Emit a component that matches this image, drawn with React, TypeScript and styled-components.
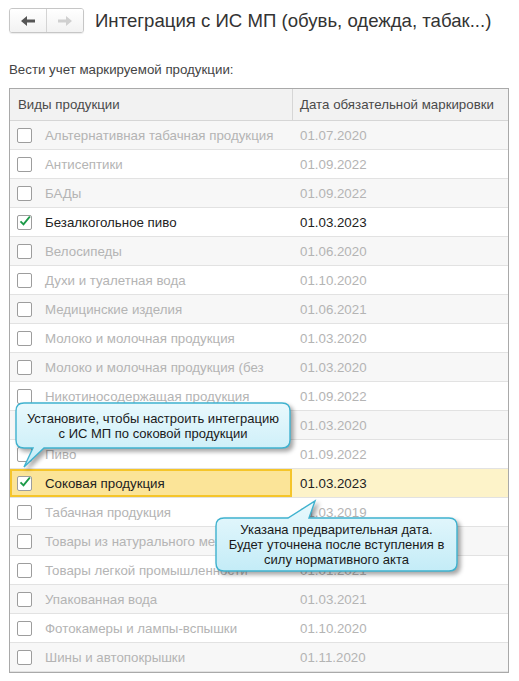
import React from 'react';
import styled, { createGlobalStyle } from 'styled-components';

interface ProductRow {
  name: string;
  date: string;
  checked?: boolean;
  selected?: boolean;
}

const rows: ProductRow[] = [
  { name: 'Альтернативная табачная продукция', date: '01.07.2020' },
  { name: 'Антисептики', date: '01.09.2022' },
  { name: 'БАДы', date: '01.09.2022' },
  { name: 'Безалкогольное пиво', date: '01.03.2023', checked: true },
  { name: 'Велосипеды', date: '01.06.2020' },
  { name: 'Духи и туалетная вода', date: '01.10.2020' },
  { name: 'Медицинские изделия', date: '01.06.2021' },
  { name: 'Молоко и молочная продукция', date: '01.03.2020' },
  { name: 'Молоко и молочная продукция (без', date: '01.03.2020' },
  { name: 'Никотиносодержащая продукция', date: '01.09.2022' },
  { name: 'Обувные товары', date: '01.03.2020' },
  { name: 'Пиво', date: '01.09.2022' },
  { name: 'Соковая продукция', date: '01.03.2023', checked: true, selected: true },
  { name: 'Табачная продукция', date: '01.03.2019' },
  { name: 'Товары из натурального меха', date: '12.08.2016' },
  { name: 'Товары легкой промышленности', date: '01.01.2021' },
  { name: 'Упакованная вода', date: '01.03.2021' },
  { name: 'Фотокамеры и лампы-вспышки', date: '01.10.2020' },
  { name: 'Шины и автопокрышки', date: '01.11.2020' },
];

const GlobalStyle = createGlobalStyle`
  body {
    margin: 0;
    background: #fff;
    font-family: 'Liberation Sans', Arial, sans-serif;
  }
`;

const App = () => {
  return (
    <Page>
      <GlobalStyle />
      <Header>
        <NavGroup>
          <NavButton>
            <Arrow dir="left" active />
          </NavButton>
          <NavButton divider>
            <Arrow dir="right" />
          </NavButton>
        </NavGroup>
        <Title>Интеграция с ИС МП (обувь, одежда, табак...)</Title>
      </Header>

      <Label>Вести учет маркируемой продукции:</Label>

      <TableWrap>
        <HeadRow>
          <HeadCell>Виды продукции</HeadCell>
          <HeadCell divider>Дата обязательной маркировки</HeadCell>
        </HeadRow>

        {rows.map((r, i) => (
          <Row key={r.name} odd={i % 2 === 0}>
            <NameCell selected={r.selected}>
              <Checkbox>{r.checked && <Check />}</Checkbox>
              <CellText enabled={r.checked}>{r.name}</CellText>
            </NameCell>
            <DateCell selected={r.selected}>
              <CellText enabled={r.checked}>{r.date}</CellText>
            </DateCell>
          </Row>
        ))}

        <Callout left={6} top={314} width={274} height={45}>
          <Bubble
            width={274}
            height={45}
            d="M8,0 H266 Q274,0 274,8 V37 Q274,45 266,45 H28 L8,64 L17,45 H8 Q0,45 0,37 V8 Q0,0 8,0 Z"
            id="g1"
          />
          <CalloutText>
            Установите, чтобы настроить интеграцию
            <br />с ИС МП по соковой продукции
          </CalloutText>
        </Callout>

        <Callout left={206} top={429} width={241} height={53}>
          <Bubble
            width={241}
            height={53}
            d="M8,0 H72 L99,-17 L93,0 H233 Q241,0 241,8 V45 Q241,53 233,53 H8 Q0,53 0,45 V8 Q0,0 8,0 Z"
            id="g2"
          />
          <CalloutText>
            Указана предварительная дата.
            <br />
            Будет уточнена после вступления в
            <br />
            силу нормативного акта
          </CalloutText>
        </Callout>
      </TableWrap>
    </Page>
  );
};

export default App;

const Arrow = ({ dir, active }: { dir: 'left' | 'right'; active?: boolean }) => (
  <svg width="14" height="10" viewBox="0 0 14 10">
    <path
      d={dir === 'left' ? 'M0,5 L6,0 V3.5 H14 V6.5 H6 V10 Z' : 'M14,5 L8,0 V3.5 H0 V6.5 H8 V10 Z'}
      fill={active ? '#555' : '#d0d0d0'}
    />
  </svg>
);

const Check = () => (
  <svg width="16" height="14" viewBox="0 0 16 14" style={{ marginLeft: 1, marginTop: -3 }}>
    <path d="M2,7.5 L6,11.5 L14.5,1" fill="none" stroke="#1c9a48" strokeWidth="2.6" />
  </svg>
);

const Bubble = ({ width, height, d, id }: { width: number; height: number; d: string; id: string }) => (
  <BubbleSvg width={width + 10} height={height + 30} viewBox={`0 -20 ${width + 10} ${height + 30}`}>
    <defs>
      <linearGradient id={id} x1="0" y1="0" x2="0" y2="1">
        <stop offset="0" stopColor="#e9f9fd" />
        <stop offset="1" stopColor="#c4ecf7" />
      </linearGradient>
    </defs>
    <path d={d} fill={`url(#${id})`} stroke="#3fb2cf" strokeWidth="1.4" />
  </BubbleSvg>
);

const Page = styled.div`
  padding: 8px 10px 8px 9px;
`;

const Header = styled.div`
  display: flex;
  align-items: center;
  gap: 11px;
  height: 25px;
`;

const NavGroup = styled.div`
  display: flex;
  border: 1px solid #c6c6c6;
  border-radius: 3px;
  overflow: hidden;
  box-shadow: 0 1px 1px rgba(0, 0, 0, 0.08);
`;

const NavButton = styled.div<{ divider?: boolean }>`
  width: 36px;
  height: 23px;
  display: flex;
  align-items: center;
  justify-content: center;
  background: linear-gradient(#ffffff, #f2f2f2);
  border-left: ${(p) => (p.divider ? '1px solid #d4d4d4' : 'none')};
`;

const Title = styled.div`
  font-size: 18.6px;
  color: #333;
  white-space: nowrap;
`;

const Label = styled.div`
  margin-top: 29px;
  font-size: 13.3px;
  color: #444;
`;

const TableWrap = styled.div`
  position: relative;
  margin-top: 11px;
  width: 500px;
  box-sizing: border-box;
  border: 1px solid #a9a9a9;
`;

const HeadRow = styled.div`
  display: grid;
  grid-template-columns: 282px 1fr;
  height: 31px;
  background: #f2f2f2;
  border-bottom: 1px solid #d6d6d6;
`;

const HeadCell = styled.div<{ divider?: boolean }>`
  display: flex;
  align-items: center;
  padding-left: ${(p) => (p.divider ? '7px' : '8px')};
  font-size: 13.3px;
  color: #4a4a4a;
  border-left: ${(p) => (p.divider ? '1px solid #d6d6d6' : 'none')};
`;

const Row = styled.div<{ odd?: boolean }>`
  display: grid;
  grid-template-columns: 282px 1fr;
  height: 29px;
  box-sizing: border-box;
  background: ${(p) => (p.odd ? '#f7f7f7' : '#fff')};
  border-bottom: 1px solid #e2e2e2;

  &:last-of-type {
    border-bottom: none;
  }
`;

const NameCell = styled.div<{ selected?: boolean }>`
  display: flex;
  align-items: center;
  gap: 13px;
  padding-left: 7px;
  overflow: hidden;
  background: ${(p) => (p.selected ? '#fbe498' : 'transparent')};
  box-shadow: ${(p) => (p.selected ? 'inset 0 0 0 2px #f5c52a' : 'none')};
`;

const DateCell = styled.div<{ selected?: boolean }>`
  display: flex;
  align-items: center;
  padding-left: 8px;
  background: ${(p) => (p.selected ? '#fdf3c9' : 'transparent')};
`;

const Checkbox = styled.div`
  flex: none;
  width: 13px;
  height: 13px;
  border: 1px solid #9d9d9d;
  border-radius: 2px;
  background: #fff;
  display: flex;
  align-items: center;
  justify-content: center;
  overflow: visible;
`;

const CellText = styled.span<{ enabled?: boolean }>`
  font-size: 13.3px;
  white-space: nowrap;
  color: ${(p) => (p.enabled ? '#222' : '#b4b4b4')};
`;

const Callout = styled.div<{ left: number; top: number; width: number; height: number }>`
  position: absolute;
  left: ${(p) => p.left}px;
  top: ${(p) => p.top}px;
  width: ${(p) => p.width}px;
  height: ${(p) => p.height}px;
`;

const BubbleSvg = styled.svg`
  position: absolute;
  left: 0;
  top: -20px;
  overflow: visible;
  filter: drop-shadow(3px 3px 2px rgba(0, 0, 0, 0.35));
`;

const CalloutText = styled.div`
  position: relative;
  height: 100%;
  display: flex;
  flex-direction: column;
  align-items: center;
  justify-content: center;
  text-align: center;
  font-size: 13px;
  line-height: 15px;
  color: #1a1a1a;
`;
